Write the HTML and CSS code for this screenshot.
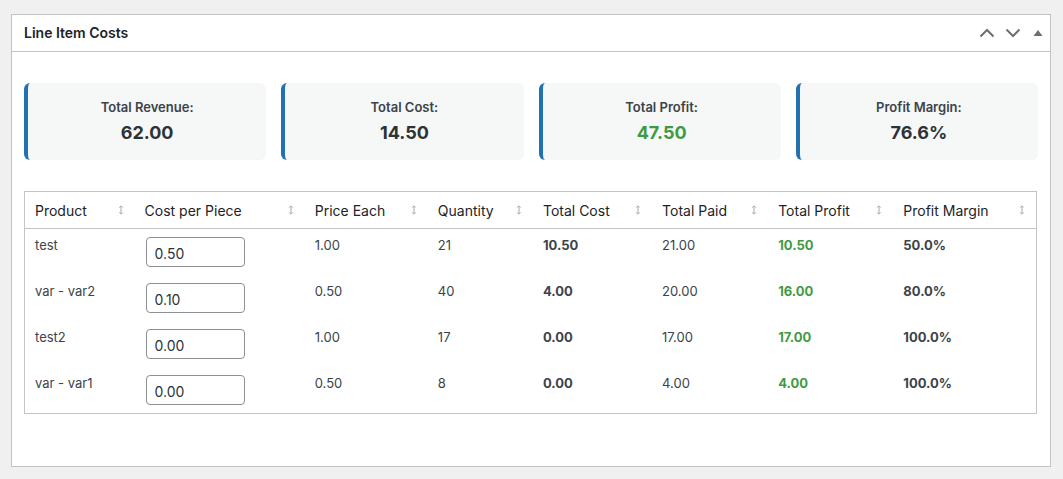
FILE: index.html
```html
<!DOCTYPE html>
<html>
<head>
<meta charset="utf-8">
<link rel="stylesheet" href="styles.css">
</head>
<body>
<div class="postbox">
  <div class="postbox-header">
    <h2 class="postbox-title">Line Item Costs</h2>
    <div class="handle-actions">
      <button class="handle-btn" aria-label="Move up">
        <svg width="16" height="16" viewBox="0 0 16 16"><path d="M1.5 11.5 L8 5 L14.5 11.5" fill="none" stroke="#6c7075" stroke-width="2"/></svg>
      </button>
      <button class="handle-btn" aria-label="Move down">
        <svg width="16" height="16" viewBox="0 0 16 16"><path d="M1.5 4.5 L8 11 L14.5 4.5" fill="none" stroke="#6c7075" stroke-width="2"/></svg>
      </button>
      <button class="handle-btn small" aria-label="Toggle panel">
        <svg width="10" height="10" viewBox="0 0 10 10"><path d="M0.5 8 L5 2 L9.5 8 Z" fill="#6c7075"/></svg>
      </button>
    </div>
  </div>
  <div class="inside">
    <div class="summary">
      <div class="card"><div class="card-label">Total Revenue:</div><div class="card-value">62.00</div></div>
      <div class="card"><div class="card-label">Total Cost:</div><div class="card-value">14.50</div></div>
      <div class="card"><div class="card-label">Total Profit:</div><div class="card-value profit">47.50</div></div>
      <div class="card"><div class="card-label">Profit Margin:</div><div class="card-value">76.6%</div></div>
    </div>

    <table class="costs">
      <colgroup>
        <col class="c1"><col class="c2"><col class="c3"><col class="c4"><col class="c5"><col class="c6"><col class="c7"><col class="c8">
      </colgroup>
      <thead>
        <tr>
          <th><span class="th-in">Product<svg class="sort" width="6" height="10" viewBox="0 0 6 10"><path d="M3 1 V9 M1.2 2.6 L3 0.8 L4.8 2.6 M1.2 7.4 L3 9.2 L4.8 7.4" fill="none" stroke="#a7aaad" stroke-width="1"/></svg></span></th>
          <th><span class="th-in">Cost per Piece<svg class="sort" width="6" height="10" viewBox="0 0 6 10"><path d="M3 1 V9 M1.2 2.6 L3 0.8 L4.8 2.6 M1.2 7.4 L3 9.2 L4.8 7.4" fill="none" stroke="#a7aaad" stroke-width="1"/></svg></span></th>
          <th><span class="th-in">Price Each<svg class="sort" width="6" height="10" viewBox="0 0 6 10"><path d="M3 1 V9 M1.2 2.6 L3 0.8 L4.8 2.6 M1.2 7.4 L3 9.2 L4.8 7.4" fill="none" stroke="#a7aaad" stroke-width="1"/></svg></span></th>
          <th><span class="th-in">Quantity<svg class="sort" width="6" height="10" viewBox="0 0 6 10"><path d="M3 1 V9 M1.2 2.6 L3 0.8 L4.8 2.6 M1.2 7.4 L3 9.2 L4.8 7.4" fill="none" stroke="#a7aaad" stroke-width="1"/></svg></span></th>
          <th><span class="th-in">Total Cost<svg class="sort" width="6" height="10" viewBox="0 0 6 10"><path d="M3 1 V9 M1.2 2.6 L3 0.8 L4.8 2.6 M1.2 7.4 L3 9.2 L4.8 7.4" fill="none" stroke="#a7aaad" stroke-width="1"/></svg></span></th>
          <th><span class="th-in">Total Paid<svg class="sort" width="6" height="10" viewBox="0 0 6 10"><path d="M3 1 V9 M1.2 2.6 L3 0.8 L4.8 2.6 M1.2 7.4 L3 9.2 L4.8 7.4" fill="none" stroke="#a7aaad" stroke-width="1"/></svg></span></th>
          <th><span class="th-in">Total Profit<svg class="sort" width="6" height="10" viewBox="0 0 6 10"><path d="M3 1 V9 M1.2 2.6 L3 0.8 L4.8 2.6 M1.2 7.4 L3 9.2 L4.8 7.4" fill="none" stroke="#a7aaad" stroke-width="1"/></svg></span></th>
          <th><span class="th-in">Profit Margin<svg class="sort" width="6" height="10" viewBox="0 0 6 10"><path d="M3 1 V9 M1.2 2.6 L3 0.8 L4.8 2.6 M1.2 7.4 L3 9.2 L4.8 7.4" fill="none" stroke="#a7aaad" stroke-width="1"/></svg></span></th>
        </tr>
      </thead>
      <tbody>
        <tr>
          <td>test</td>
          <td><input class="cost-input" type="text" value="0.50"></td>
          <td>1.00</td><td>21</td><td class="b">10.50</td><td>21.00</td><td class="b green">10.50</td><td class="b">50.0%</td>
        </tr>
        <tr>
          <td>var - var2</td>
          <td><input class="cost-input" type="text" value="0.10"></td>
          <td>0.50</td><td>40</td><td class="b">4.00</td><td>20.00</td><td class="b green">16.00</td><td class="b">80.0%</td>
        </tr>
        <tr>
          <td>test2</td>
          <td><input class="cost-input" type="text" value="0.00"></td>
          <td>1.00</td><td>17</td><td class="b">0.00</td><td>17.00</td><td class="b green">17.00</td><td class="b">100.0%</td>
        </tr>
        <tr>
          <td>var - var1</td>
          <td><input class="cost-input" type="text" value="0.00"></td>
          <td>0.50</td><td>8</td><td class="b">0.00</td><td>4.00</td><td class="b green">4.00</td><td class="b">100.0%</td>
        </tr>
      </tbody>
    </table>
  </div>
</div>
</body>
</html>
```

FILE: styles.css
```css
* { box-sizing: border-box; }

body {
  margin: 0;
  padding: 14px 12px 0 11px;
  background: #f0f0f1;
  font-family: Inter, "Noto Sans", "Liberation Sans", sans-serif;
  color: #3c434a;
  font-size: 13px;
}

.postbox {
  width: 1040px;
  height: 453px;
  background: #fff;
  border: 1px solid #c3c4c7;
}

.postbox-header {
  height: 37px;
  border-bottom: 1px solid #c3c4c7;
  display: flex;
  align-items: center;
  justify-content: space-between;
  padding: 0 0 0 12px;
}

.postbox-title {
  margin: 0;
  font-size: 14px;
  font-weight: 600;
  color: #1d2327;
  line-height: 1.4;
}

.handle-actions {
  display: flex;
  align-items: center;
}

.handle-btn {
  width: 26px;
  height: 36px;
  border: 0;
  background: none;
  padding: 0;
  display: flex;
  align-items: center;
  justify-content: center;
}
.handle-btn.small { width: 24px; }

.inside {
  padding: 31px 12px 0 12px;
}

.summary {
  display: grid;
  grid-template-columns: repeat(4, 1fr);
  gap: 15px;
}

.card {
  height: 77px;
  background: #f6f7f7;
  border-left: 4px solid #2271b1;
  border-radius: 6px;
  display: flex;
  flex-direction: column;
  align-items: center;
  padding-top: 15px;
}

.card-label {
  font-size: 13px;
  font-weight: 600;
  line-height: 18px;
  color: #3c434a;
}

.card-value {
  margin-top: 5px;
  font-size: 18px;
  font-weight: 700;
  line-height: 24px;
  color: #2c3338;
}

.card-value.profit { color: #3f9b43; }

.costs {
  margin-top: 31px;
  width: 1013px;
  border-collapse: collapse;
  table-layout: fixed;
  border: 1px solid #c3c4c7;
}

.c1 { width: 110px; }
.c2 { width: 170px; }
.c3 { width: 123px; }
.c4 { width: 105px; }
.c5 { width: 119px; }
.c6 { width: 116px; }
.c7 { width: 125px; }
.c8 { width: 143px; }

.costs th {
  height: 37px;
  padding: 0 10px;
  text-align: left;
  font-weight: 400;
  font-size: 14px;
  color: #1d2327;
  border-bottom: 1px solid #c3c4c7;
  vertical-align: middle;
}

.th-in {
  display: flex;
  align-items: center;
  justify-content: space-between;
}

.sort { flex: none; margin-right: 1px; }

.costs td {
  height: 46px;
  padding: 8px 10px;
  vertical-align: top;
  line-height: 16px;
  font-size: 13px;
  color: #3c434a;
}

.costs td.b { font-weight: 700; }
.costs td.green { color: #3f9b43; }

.cost-input {
  display: block;
  width: 99px;
  height: 30px;
  margin: 0 0 0 1px;
  padding: 2px 8px 0;
  border: 1px solid #8c8f94;
  border-radius: 4px;
  font-family: Inter, "Noto Sans", "Liberation Sans", sans-serif;
  font-size: 14px;
  color: #2c3338;
  background: #fff;
}
```
